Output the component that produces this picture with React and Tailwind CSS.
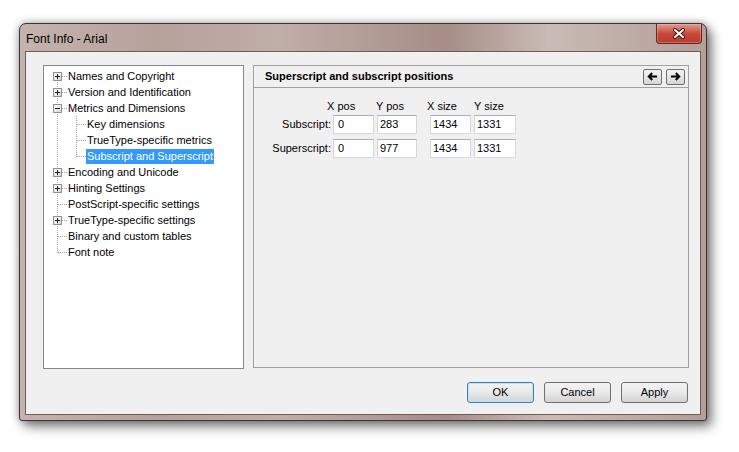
import React from "react";

const treeItems = [
  { label: "Names and Copyright", level: 0, box: "+" , first: true },
  { label: "Version and Identification", level: 0, box: "+" },
  { label: "Metrics and Dimensions", level: 0, box: "-" },
  { label: "Key dimensions", level: 1 },
  { label: "TrueType-specific metrics", level: 1 },
  { label: "Subscript and Superscript", level: 1, selected: true, lastChild: true },
  { label: "Encoding and Unicode", level: 0, box: "+" },
  { label: "Hinting Settings", level: 0, box: "+" },
  { label: "PostScript-specific settings", level: 0 },
  { label: "TrueType-specific settings", level: 0, box: "+" },
  { label: "Binary and custom tables", level: 0 },
  { label: "Font note", level: 0, last: true },
];

const DOT = "#a0a0a0";

// the dotted connector lines + expander box of one tree row
const Gutter = ({ item }) => {
  const w = item.level === 0 ? 24 : 42;
  return (
    <svg width={w} height="16" className="shrink-0" shapeRendering="crispEdges">
      {item.level === 0 ? (
        <>
          <line x1="13.5" y1={item.first ? 8 : 0} x2="13.5" y2={item.last ? 9 : 16} stroke={DOT} strokeDasharray="1 1" />
          <line x1="14" y1="8.5" x2="23" y2="8.5" stroke={DOT} strokeDasharray="1 1" />
        </>
      ) : (
        <>
          <line x1="13.5" y1="0" x2="13.5" y2="16" stroke={DOT} strokeDasharray="1 1" />
          <line x1="32.5" y1="0" x2="32.5" y2={item.lastChild ? 9 : 16} stroke={DOT} strokeDasharray="1 1" />
          <line x1="33" y1="8.5" x2="42" y2="8.5" stroke={DOT} strokeDasharray="1 1" />
        </>
      )}
      {item.box && (
        <>
          <defs>
            <linearGradient id="bx" x1="0" y1="0" x2="1" y2="1">
              <stop offset="0" stopColor="#ffffff" />
              <stop offset="1" stopColor="#d4d4d4" />
            </linearGradient>
          </defs>
          <rect x="9.5" y="4.5" width="8" height="8" fill="url(#bx)" stroke="#919191" />
          <line x1="11" y1="8.5" x2="16" y2="8.5" stroke="#222" />
          {item.box === "+" && <line x1="13.5" y1="6" x2="13.5" y2="11" stroke="#222" />}
        </>
      )}
    </svg>
  );
};

const TreeRow = ({ item }) => (
  <div className="flex h-4 items-center">
    <Gutter item={item} />
    <span
      className={`whitespace-nowrap leading-[15px] ${
        item.selected ? "bg-[#3399ff] text-white px-px" : "text-black"
      } ${item.level === 1 && !item.selected ? "ml-px" : ""}`}
    >
      {item.label}
    </span>
  </div>
);

const Field = ({ value, first }) => (
  <div
    className={`h-[19px] bg-white border border-[#d5d9df] border-t-[#abadb3] flex items-center leading-none ${
      first ? "pl-[4px]" : "pl-[2px]"
    }`}
  >
    {value}
  </div>
);

const ArrowBtn = ({ dir }) => (
  <button className="w-[19px] h-4 rounded-[2px] border border-[#707070] bg-gradient-to-b from-[#f4f4f4] to-[#d6d6d6] flex items-center justify-center">
    <svg width="11" height="9" viewBox="0 0 11 9">
      {dir === "left" ? (
        <path d="M10 4.5H2 M5.2 1 L1.8 4.5 L5.2 8" stroke="#000" strokeWidth="2" fill="none" />
      ) : (
        <path d="M1 4.5H9 M5.8 1 L9.2 4.5 L5.8 8" stroke="#000" strokeWidth="2" fill="none" />
      )}
    </svg>
  </button>
);

const DlgButton = ({ children, primary }) => (
  <button
    className={`w-[67px] h-[21px] rounded-[3px] border text-[11px] text-black bg-gradient-to-b from-[#f3f3f3] via-[#e9e9e9] to-[#d3d3d3] ${
      primary ? "border-[#3c7fb1] shadow-[inset_0_0_0_1px_#bfe6f8]" : "border-[#707070]"
    }`}
  >
    {children}
  </button>
);

export default function App() {
  return (
    <div className="w-[739px] h-[452px] bg-white pt-[23px] pl-[19px] font-['Liberation_Sans',Arial,sans-serif] text-[11px]">
      <div className="w-[688px] h-[398px] rounded-t-[7px] rounded-b-[3px] border border-[#3e3434] bg-[#b8a49f] flex flex-col px-[5px] shadow-[0_0_8px_rgba(0,0,0,0.35),5px_6px_12px_rgba(0,0,0,0.45)] bg-[linear-gradient(90deg,#c4b3ae_0%,#b6a19b_20%,#c0aea9_38%,#a68d86_62%,#cabbb6_77%,#b39e98_100%)]">
        {/* title bar */}
        <div className="h-[27px] flex items-center justify-between">
          <span className="text-[12px] text-black pl-px pt-[2px]">Font Info - Arial</span>
          <div className="self-start w-[46px] h-[20px] -mr-[1px] rounded-b-[4px] border border-t-0 border-[#5a2a24] bg-gradient-to-b from-[#e09a8f] via-[#c8493a] to-[#b83a2a] flex items-center justify-center shadow-[inset_0_0_0_1px_rgba(255,200,190,0.35)]">
            <svg width="14" height="11" viewBox="0 0 14 11">
              <path d="M3 2 L11 9 M11 2 L3 9" stroke="#3a1a16" strokeWidth="4" strokeLinecap="round" />
              <path d="M3 2 L11 9 M11 2 L3 9" stroke="#ffffff" strokeWidth="2" strokeLinecap="round" />
            </svg>
          </div>
        </div>

        {/* client area */}
        <div className="w-[676px] h-[364px] border border-[#6e5c57] bg-[#f0f0f0] flex flex-col pt-[13px] pl-[17px] pr-[11px]">
          <div className="flex h-[304px] gap-[9px]">
            {/* tree */}
            <div className="w-[201px] h-[304px] border border-[#828790] bg-white pt-[2px]">
              {treeItems.map((item) => (
                <TreeRow key={item.label} item={item} />
              ))}
            </div>

            {/* property panel */}
            <div className="w-[436px] h-[303px] border border-[#a0a0a0] flex flex-col">
              <div className="h-[22px] border-b border-[#a0a0a0] flex items-center justify-between pl-[11px] pr-[3px]">
                <span className="font-bold text-[11px] text-black">Superscript and subscript positions</span>
                <div className="flex gap-[4px]">
                  <ArrowBtn dir="left" />
                  <ArrowBtn dir="right" />
                </div>
              </div>

              <div className="pt-[10px] text-black">
                <div className="flex h-[16px] items-center pl-[73px]">
                  <span className="w-[49px]">X pos</span>
                  <span className="w-[51px]">Y pos</span>
                  <span className="w-[47px]">X size</span>
                  <span>Y size</span>
                </div>
                <div className="flex flex-col gap-[5px] mt-px">
                  {[
                    ["Subscript:", "0", "283", "1434", "1331"],
                    ["Superscript:", "0", "977", "1434", "1331"],
                  ].map(([label, xp, yp, xs, ys]) => (
                    <div key={label} className="flex items-center">
                      <span className="w-[77px] text-right">{label}</span>
                      <div className="w-[41px] ml-[2px]"><Field value={xp} first /></div>
                      <div className="w-[40px] ml-[3px]"><Field value={yp} /></div>
                      <div className="w-[41px] ml-[13px]"><Field value={xs} /></div>
                      <div className="w-[42px] ml-[3px]"><Field value={ys} /></div>
                    </div>
                  ))}
                </div>
              </div>
            </div>
          </div>

          {/* dialog buttons */}
          <div className="flex justify-end gap-[10px] mt-[13px] pr-px">
            <DlgButton primary>OK</DlgButton>
            <DlgButton>Cancel</DlgButton>
            <DlgButton>Apply</DlgButton>
          </div>
        </div>
      </div>
    </div>
  );
}
